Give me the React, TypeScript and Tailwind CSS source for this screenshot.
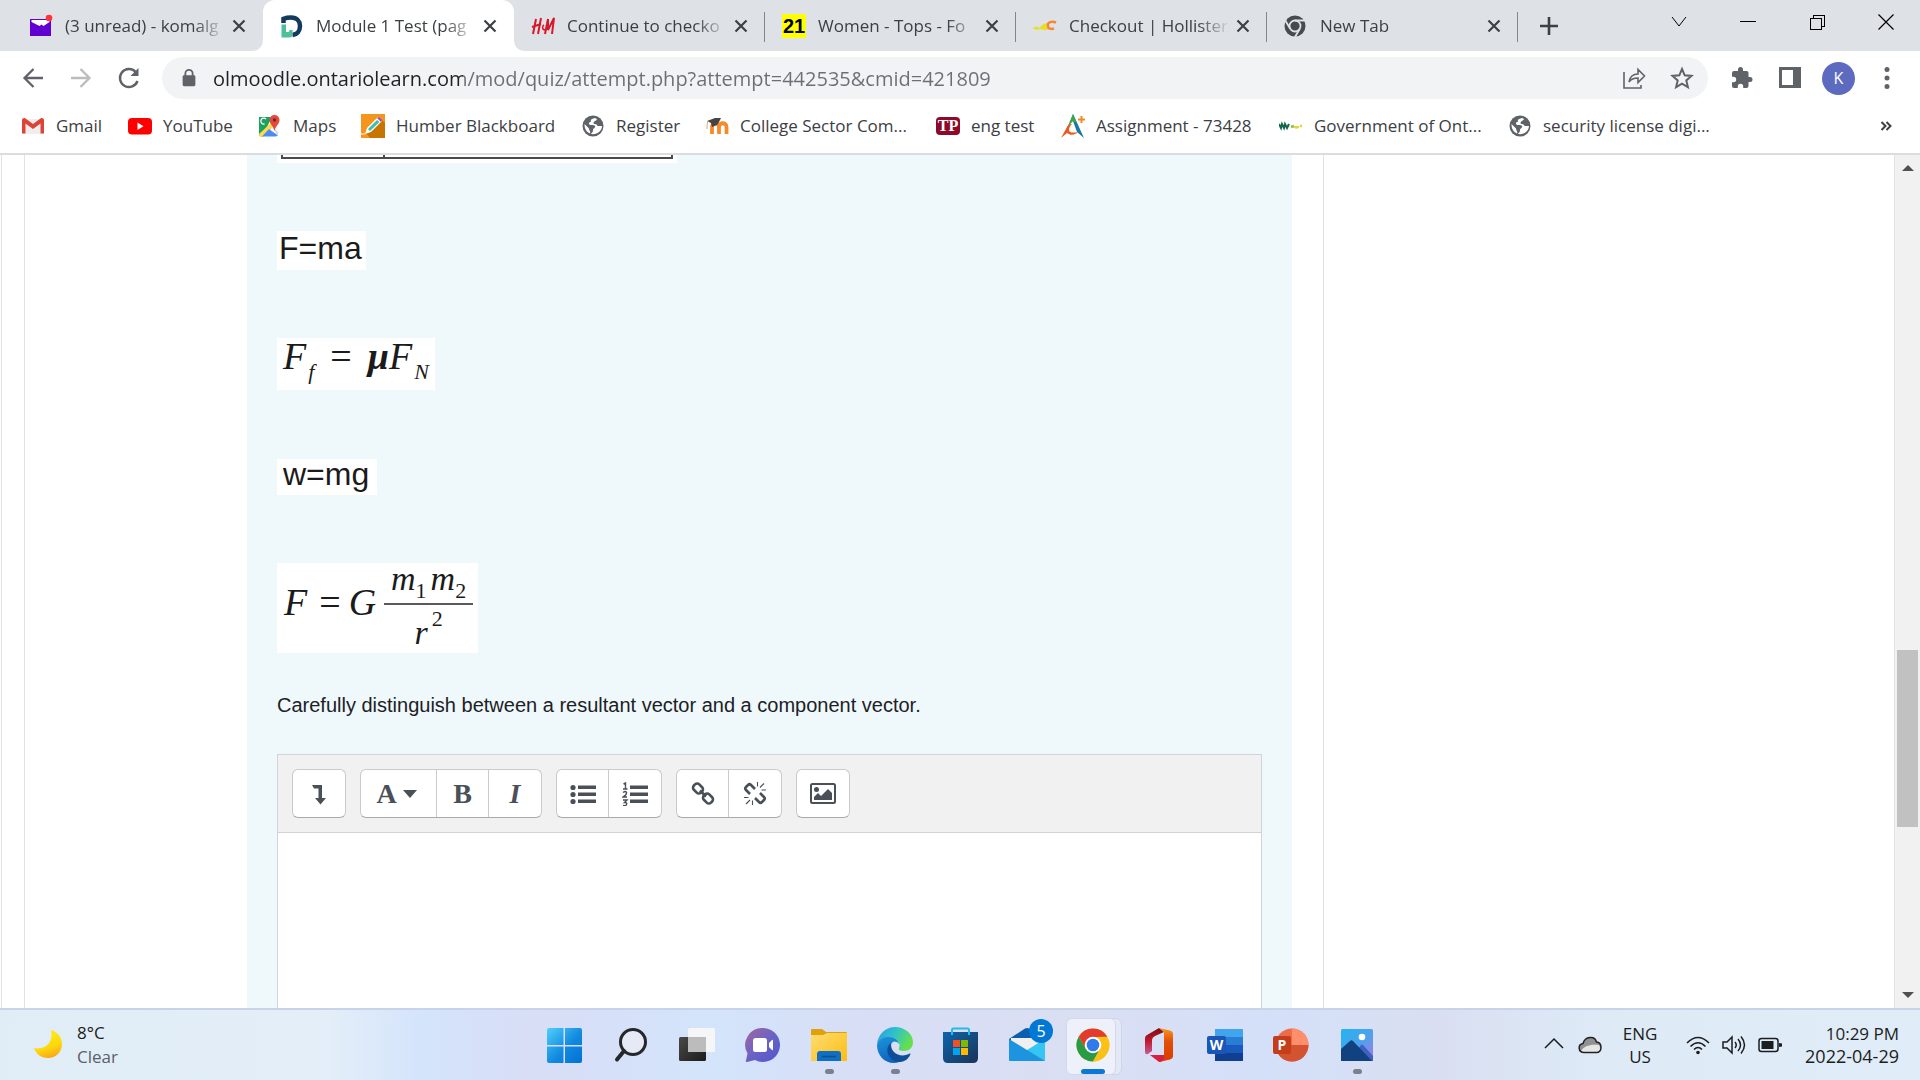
import React from "react";

/* ---------- Tab icons ---------- */

const YahooMailIcon = () => (
  <svg viewBox="0 0 24 24" className="size-6">
    <path d="M1 5h21v17H1z" fill="#6001d2" />
    <path d="M2.500 6h18v2l-6 4-2-1.500L10.500 12 2.500 8z" fill="#fff" />
    <circle cx="20" cy="4" r="3.300" fill="#ff333a" />
  </svg>
);
const OntarioLearnIcon = () => (
  <svg viewBox="0 0 24 24" className="size-6">
    <path d="M3.500 9V4.800C6 3.800 8 3.500 11 3.500c6 0 9 4 9 8.500 0 5-3 8.500-7.500 9" fill="none" stroke="#123a5c" strokeWidth="4.500" />
    <path d="M1.500 10.500h4.500V18h2q1.500 0 1.500-2h3v4q0 3.500-3 3.500h-8z" fill="#4dbf9a" />
  </svg>
);
const HmIcon = () => (
  <svg viewBox="0 0 26 24" className="h-6 w-[26px]" fill="none" stroke="#d6182a" strokeWidth="2">
    <path d="M5 5 2 20M10 4 7 20M1 13l9-3M17 5l-3 15M17 5v11l6-12-2 16" />
    <path d="M13 11c-2 1-2 5 1 5" strokeWidth="1.500" />
  </svg>
);
const HollisterIcon = () => (
  <svg viewBox="0 0 24 24" className="size-6">
    <path d="M0 14c2-2 4-2 6 0 2-2 5-5 9-5-2 2-2 4 0 6-3 2-6 0-8 0-2 1-5 1-7-1z" fill="#e8df20" />
    <path d="M23 8.500c-5-2-9 0-8 4 0 2 3 3 6 2" fill="none" stroke="#f98436" strokeWidth="2.500" />
  </svg>
);
const ChromeMonoIcon = () => (
  <svg viewBox="0 0 24 24" className="size-6">
    <circle cx="11" cy="12" r="10.500" fill="#474b50" />
    <circle cx="11" cy="12" r="5.500" fill="none" stroke="#dee1e6" strokeWidth="1.800" />
    <path d="M11 6.500h10M6.200 14.700 1 6M15.800 14.700 11 23" stroke="#dee1e6" strokeWidth="1.800" />
  </svg>
);

/* ---------- Bookmark icons ---------- */

const GmailIcon = () => (
  <svg viewBox="0 0 24 24" className="size-6">
    <path d="M2 5h20v15H2z" fill="#eeeeee" />
    <path d="M1 6v13.500h3.500V9.500L12 15l7.500-5.500v10H23V6c0-1.500-2-2.500-3.500-1.500L12 10 4.500 4.500C3 3.500 1 4.500 1 6z" fill="#dc4437" />
  </svg>
);
const YouTubeIcon = () => (
  <svg viewBox="0 0 24 24" className="size-6">
    <rect y="4" width="24" height="16.500" rx="4" fill="#f00" />
    <path d="m9.500 8.500 6 3.700-6 3.800z" fill="#fff" />
  </svg>
);
const MapsIcon = () => (
  <svg viewBox="0 0 24 24" className="size-6">
    <path d="M1 3h13l-5 10-8 9z" fill="#1fa15f" />
    <path d="m1 20 12-11 3 3L5 23H2z" fill="#ffd94b" />
    <path d="m11 15-7 7.500h14l2-1z" fill="#4b8bf4" />
    <path d="m14 12 6 6v4z" fill="#d5d8dc" />
    <path d="M6.500 10a3 3 0 1 1 1.500-5" stroke="#fff" fill="none" strokeWidth="1.300" />
    <path d="M11.500 6a5 5 0 0 1 10 0c0 4-3.500 5-5 11-1.500-6-5-7-5-11z" fill="#e24a3e" />
    <circle cx="16.500" cy="6" r="1.700" fill="#7d231e" />
  </svg>
);
const PencilTileIcon = () => (
  <svg viewBox="0 0 24 24" className="size-6">
    <path d="M0 0h24v24H0z" fill="#f6951e" />
    <path d="m20 5 4 4v15H9l-4-5z" fill="#c87400" />
    <path d="m4 20 2-6L17 3l4 4L10 18z" fill="#fff" />
    <path d="m7 15 9-9 2.500 2L9 17z" fill="#35c3b0" />
    <path d="m16 4 2-1 3 3-1 2z" fill="#a44bbd" />
    <path d="M0 20h4" stroke="#fff" />
  </svg>
);
const GlobeIcon = () => (
  <svg viewBox="0 0 24 24" className="size-6">
    <circle cx="12" cy="12" r="10.500" fill="#5f6368" />
    <path d="M14 4c-2 1-5 1-4 3 1 1-3 1-2 3s5 0 6 2-2 2-2 4c0 3-2 3-2 4 6 1 11-3 11-8h-4c-1 0-1-2-3-2s-2-2 0-3 3-2 0-3zM3.500 10c0 5 2 8 5.500 9.500 1-2-1-3-1-5z" fill="#fff" />
  </svg>
);
const MoodleIcon = () => (
  <svg viewBox="0 0 24 24" className="size-6">
    <path d="M7 20v-7c0-5 7-5 7 0v7m0-7c0-5 7.500-5 7.500 0v7" fill="none" stroke="#f58a2b" strokeWidth="3.800" />
    <path d="m2 7 8-3 6 0-2 4-2 3-5 2-1-4z" fill="#444" />
    <path d="M3 7c-1 3-1 5-1 8" stroke="#d9a77c" fill="none" />
  </svg>
);
const TpIcon = () => (
  <span className="flex h-[18px] w-6 items-center justify-center rounded-sm bg-[#8d0a2a] font-['Liberation_Serif',serif] text-base leading-none font-bold text-white">
    TP
  </span>
);
const APlusIcon = () => (
  <svg viewBox="0 0 24 24" className="size-6">
    <path d="M12 0 9 8l3-1 4 11 7 6z" fill="#1778a5" />
    <path d="M12 0 6 14l6-7 4 2z" fill="#3fa648" />
    <path d="m6 13-6 11 6-5c4 3 8 2 11-1-4 1-9 1-9-2 0-2 1-4 3-6-3 0-4 1-5 3z" fill="#ea5a20" />
    <path d="M20.500 2v7M17 5.500h7" stroke="#f28a20" strokeWidth="2" />
  </svg>
);
const OntarioGovIcon = () => (
  <svg viewBox="0 0 24 24" className="size-6" fill="none" strokeWidth="2.500">
    <path d="M0 10l2 4 1-4 2 4 1-4 2 4 2-4" stroke="#13694a" strokeWidth="2" />
    <path d="m12 13 3-1" stroke="#9ab54a" />
    <path d="M16 12c0 2 3 2 3 0M21 12h2" stroke="#d9d92e" />
  </svg>
);

/* ---------- Taskbar icons ---------- */

const StartIcon = () => (
  <svg viewBox="0 0 36 36" className="size-9">
    <defs>
      <linearGradient id="start" x1="0" y1="0" x2="1" y2="1">
        <stop stopColor="#4fd0fb" />
        <stop offset=".55" stopColor="#128ae0" />
        <stop offset="1" stopColor="#0271d3" />
      </linearGradient>
    </defs>
    <path d="M2 1h14.500v17H0V3q0-2 2-2zM18 1h15q2 0 2 2v15H18zM0 19.500h16.500V36H2q-2 0-2-2zM18 19.500h17V34q0 2-2 2H18z" fill="url(#start)" />
  </svg>
);
const SearchIcon = () => (
  <svg viewBox="0 0 36 36" className="size-9" fill="none" stroke="#26272a" strokeLinecap="round">
    <circle cx="20" cy="15" r="12.500" fill="#e6e9f6" strokeWidth="3" />
    <path d="m11 24-7 8.500" strokeWidth="4" />
  </svg>
);
const TaskViewIcon = () => (
  <svg viewBox="0 0 36 36" className="size-9">
    <defs>
      <linearGradient id="tv" x1="0" y1="0" x2="1" y2="1">
        <stop stopColor="#4a4a48" />
        <stop offset="1" stopColor="#1c1c1b" />
      </linearGradient>
    </defs>
    <rect y="10" width="27" height="24" rx="1.500" fill="url(#tv)" />
    <rect x="9" y="1" width="27" height="24" rx="1.500" fill="#f7f7f7" fillOpacity=".9" />
    <path d="M9 10h18v15H9z" fill="#bcbcbc" />
  </svg>
);
const ChatIcon = () => (
  <svg viewBox="0 0 36 36" className="size-9">
    <defs>
      <linearGradient id="chat" x1="0" y1="0" x2="1" y2="1">
        <stop stopColor="#a5669f" />
        <stop offset=".5" stopColor="#6a63c4" />
        <stop offset="1" stopColor="#5353cf" />
      </linearGradient>
    </defs>
    <path d="M18 1a17 17 0 1 1-8 32l-8 2c-1 0-1.500-.5-1-1.500l1.500-7A17 17 0 0 1 18 1z" fill="url(#chat)" />
    <rect x="8" y="11" width="14" height="14" rx="2.500" fill="#fff" />
    <path d="m24 16 3-3q1-.5 1 .5v9q0 1-1 .5l-3-3z" fill="#fff" />
  </svg>
);
const ExplorerIcon = () => (
  <svg viewBox="0 0 36 36" className="size-9">
    <defs>
      <linearGradient id="folder" x1="0" y1="0" x2="1" y2="1">
        <stop stopColor="#ffdc72" />
        <stop offset="1" stopColor="#fbbd13" />
      </linearGradient>
    </defs>
    <path d="M0 3q0-1 1-1h10l4 3h20q1 0 1 1v5H0z" fill="#dfa00b" />
    <path d="M0 8h12l4-2h20v27q0 1-1 1H0z" fill="url(#folder)" />
    <path d="M6 34v-7q0-3 3-3h18q3 0 3 3v7z" fill="#0f6fc3" />
    <path d="M11 29.500h14" stroke="#0a4f92" strokeWidth="1.500" />
  </svg>
);
const EdgeIcon = () => (
  <svg viewBox="0 0 36 36" className="size-9">
    <defs>
      <linearGradient id="eg" x1="0" y1="0" x2="1" y2=".4">
        <stop stopColor="#2b9be0" />
        <stop offset=".5" stopColor="#2fc0cf" />
        <stop offset="1" stopColor="#64e04f" />
      </linearGradient>
      <linearGradient id="eb" x1="0" y1="0" x2=".4" y2="1">
        <stop stopColor="#1c95dd" />
        <stop offset="1" stopColor="#0d64bd" />
      </linearGradient>
    </defs>
    <path d="M0 17C1 7 9 0 18 0c10 0 18 7 18 15 0 6-4 9-9 9-4 0-6-1-5-3 2-4-1-8-6-9C9 10 3 12 0 17z" fill="url(#eg)" />
    <path d="M0 18c1-5 6-8 11-8 6 0 10 3 11 7-3-4-8-3-8 2 0 7 5 12 12 13-3 3-6 4-9 4C7 36 0 28 0 18z" fill="url(#eb)" />
    <path d="M14 16c-8 6-2 19 9 19 5 0 9-4 10-7 1-1 0-2-1-1-9 4-19-1-18-11z" fill="#0d4e98" />
  </svg>
);
const StoreIcon = () => (
  <svg viewBox="0 0 36 36" className="size-9">
    <defs>
      <linearGradient id="store" x1="0" y1="0" x2="1" y2="1">
        <stop stopColor="#0b66ad" />
        <stop offset="1" stopColor="#1d3257" />
      </linearGradient>
    </defs>
    <path d="M0 5h35v26q0 5-5 5H5q-5 0-5-5z" fill="url(#store)" />
    <path d="M9 8V3q0-1.500 1.500-1.500h14Q26 1.500 26 3v5" fill="none" stroke="#27b9ee" strokeWidth="2" />
    <path d="M10 13h7v7h-7z" fill="#f25022" />
    <path d="M18 13h7v7h-7z" fill="#7fba00" />
    <path d="M10 21h7v7h-7z" fill="#00a4ef" />
    <path d="M18 21h7v7h-7z" fill="#ffb900" />
  </svg>
);
const MailIcon = () => (
  <svg viewBox="0 0 36 36" className="size-9">
    <path d="M0 12 16 1.500q2-1 4 0L36 12v4H0z" fill="#0b5fae" />
    <path d="M2 11h32v8L18 25 2 17z" fill="#f0f0f0" />
    <path d="M36 12 0 34h35q1 0 1-1z" fill="#35c5f1" />
    <path d="m0 12 36 22H1q-1 0-1-1z" fill="#1d94e0" />
  </svg>
);
const ChromeIcon = () => (
  <svg viewBox="0 0 36 36" className="size-9">
    <circle cx="18" cy="18" r="16.500" fill="#fbc116" />
    <path d="M3.700 9.750A16.500 16.500 0 0 1 32.300 9.750L18 10 11 22z" fill="#e33b2e" />
    <path d="M3.700 9.750A16.500 16.500 0 0 0 18 34.500L25 22 11 22z" fill="#2a9a45" />
    <path d="M18 10h14.300A16.500 16.500 0 0 1 18 34.500L25 22z" fill="#fbc116" />
    <circle cx="18" cy="18" r="8.300" fill="#fff" />
    <circle cx="18" cy="18" r="6.300" fill="#2f7bea" />
  </svg>
);
const OfficeIcon = () => (
  <svg viewBox="0 0 36 36" className="size-9">
    <defs>
      <linearGradient id="of" x1="0" y1="0" x2="0" y2="1">
        <stop stopColor="#7a0c12" />
        <stop offset=".5" stopColor="#c01a2e" />
        <stop offset="1" stopColor="#c75a9c" />
      </linearGradient>
      <linearGradient id="oo" x1="0" y1="0" x2="0" y2="1">
        <stop stopColor="#f79a1e" />
        <stop offset=".4" stopColor="#e24e08" />
        <stop offset="1" stopColor="#d93b01" />
      </linearGradient>
    </defs>
    <path d="M4 11q0-2 2-3L18 1l5 4-9 4q-3 1.500-3 4v11l-4 3q-3 1-3-2z" fill="url(#of)" />
    <path d="m18 1 11 2.500q3 1 3 3v23q0 2-3 3L18 35l5-6V5z" fill="url(#oo)" />
    <path d="M9 28h14v3q-1 4-5 4z" fill="#d81f42" />
  </svg>
);
const WordIcon = () => (
  <svg viewBox="0 0 36 36" className="size-9">
    <path d="M8 2h28v9H8z" fill="#41a5ee" />
    <path d="M8 10h28v8H8z" fill="#2b7cd3" />
    <path d="M8 18h28v8H8z" fill="#185abd" />
    <path d="M8 26h28v8H8z" fill="#103f91" />
    <rect y="9" width="19" height="18" rx="2" fill="#1a56b8" />
    <text x="9.500" y="23" textAnchor="middle" fontSize="14" fontWeight="700" fontFamily="Open Sans, sans-serif" fill="#fff">W</text>
  </svg>
);
const PowerPointIcon = () => (
  <svg viewBox="0 0 36 36" className="size-9">
    <circle cx="19" cy="18" r="16.500" fill="#ed6c47" />
    <path d="M19 1.500A16.500 16.500 0 0 1 35.500 18H19z" fill="#ff8f6b" />
    <path d="M2.500 18h33a16.500 16.500 0 0 1-33 0z" fill="#d35230" />
    <rect y="9" width="18" height="18" rx="2" fill="#c43e1c" />
    <text x="9" y="23" textAnchor="middle" fontSize="14" fontWeight="700" fontFamily="Open Sans, sans-serif" fill="#fff">P</text>
  </svg>
);
const PhotosIcon = () => (
  <svg viewBox="0 0 36 36" className="size-9">
    <defs>
      <linearGradient id="ph" x1="0" y1="0" x2="1" y2="1">
        <stop stopColor="#22b4ee" />
        <stop offset=".5" stopColor="#4aa3ec" />
        <stop offset="1" stopColor="#a77be0" />
      </linearGradient>
    </defs>
    <rect x="2" y="2" width="32" height="32" rx="1.500" fill="url(#ph)" />
    <path d="m16 26 6-8q1-1 2 0l10 11v5H16z" fill="#3f61c4" />
    <path d="M2 22 11 14q1.500-1.500 3 0l19 20H2z" fill="#11417f" />
    <circle cx="23" cy="10" r="3.300" fill="#fff" />
  </svg>
);

/* ---------- Data ---------- */

const tabs = [
  { title: "(3 unread) - komalg", icon: <YahooMailIcon />, active: false, divider: false },
  { title: "Module 1 Test (pag", icon: <OntarioLearnIcon />, active: true, divider: false },
  { title: "Continue to checko", icon: <HmIcon />, active: false, divider: true },
  {
    title: "Women - Tops - Fo",
    icon: (
      <span className="flex size-6 items-center justify-center bg-[#ffff00] font-['Liberation_Sans',sans-serif] text-xl font-bold text-black">
        21
      </span>
    ),
    active: false,
    divider: true,
  },
  { title: "Checkout | Hollister", icon: <HollisterIcon />, active: false, divider: true },
  { title: "New Tab", icon: <ChromeMonoIcon />, active: false, divider: true },
];

const bookmarks = [
  { label: "Gmail", icon: <GmailIcon />, width: "w-[107px]" },
  { label: "YouTube", icon: <YouTubeIcon />, width: "w-[130px]" },
  { label: "Maps", icon: <MapsIcon />, width: "w-[103px]" },
  { label: "Humber Blackboard", icon: <PencilTileIcon />, width: "w-[220px]" },
  { label: "Register", icon: <GlobeIcon />, width: "w-[124px]" },
  { label: "College Sector Com...", icon: <MoodleIcon />, width: "w-[231px]" },
  { label: "eng test", icon: <TpIcon />, width: "w-[125px]" },
  { label: "Assignment - 73428", icon: <APlusIcon />, width: "w-[218px]" },
  { label: "Government of Ont...", icon: <OntarioGovIcon />, width: "w-[229px]" },
  { label: "security license digi...", icon: <GlobeIcon />, width: "w-[220px]" },
];

const apps = [
  { name: "Start", icon: <StartIcon />, state: "" },
  { name: "Search", icon: <SearchIcon />, state: "" },
  { name: "Task View", icon: <TaskViewIcon />, state: "" },
  { name: "Chat", icon: <ChatIcon />, state: "" },
  { name: "File Explorer", icon: <ExplorerIcon />, state: "open" },
  { name: "Microsoft Edge", icon: <EdgeIcon />, state: "open" },
  { name: "Microsoft Store", icon: <StoreIcon />, state: "" },
  { name: "Mail", icon: <MailIcon />, state: "badge" },
  { name: "Google Chrome", icon: <ChromeIcon />, state: "active" },
  { name: "Office", icon: <OfficeIcon />, state: "" },
  { name: "Word", icon: <WordIcon />, state: "" },
  { name: "PowerPoint", icon: <PowerPointIcon />, state: "" },
  { name: "Photos", icon: <PhotosIcon />, state: "open" },
];

/* ---------- Browser chrome ---------- */

const CloseGlyph = () => (
  <svg viewBox="0 0 14 14" className="size-3.5" stroke="#3c4043" strokeWidth="2.200">
    <path d="m1.500 1.500 11 11m0-11-11 11" />
  </svg>
);

function TabStrip() {
  return (
    <header className="flex h-[51px] shrink-0 bg-[#dee1e6] pl-3">
      <div role="tablist" className="flex">
        {tabs.map((t) => (
          <div
            key={t.title}
            className={
              t.active
                ? "relative flex w-[251px] items-center rounded-t-xl bg-white pr-[17px] pl-[17px]"
                : "relative flex w-[251px] items-center pr-[17px] pl-[17px]"
            }
          >
            {t.active && (
              <svg viewBox="0 0 275 12" className="absolute bottom-0 -left-3 h-3 w-[275px]" fill="#fff">
                <path d="M0 12q12 0 12-12v12zM275 12q-12 0-12-12v12z" />
              </svg>
            )}
            <span className="flex w-9 shrink-0">{t.icon}</span>
            <button
              role="tab"
              aria-selected={t.active}
              className="min-w-0 flex-1 text-left text-[17px] whitespace-nowrap text-[#3c4043] [mask-image:linear-gradient(to_right,black_80%,transparent)]"
            >
              {t.title}
            </button>
            <button aria-label={"Close " + t.title} className="ml-1.5">
              <CloseGlyph />
            </button>
            {t.divider && <span className="absolute top-3 right-0 h-[30px] w-px bg-[#80868b]" />}
          </div>
        ))}
      </div>
      <button aria-label="New tab" className="ml-5 self-center">
        <svg viewBox="0 0 22 22" className="size-[22px]" stroke="#3c4043" strokeWidth="2.600">
          <path d="M11 2v18M2 11h18" />
        </svg>
      </button>
      <div className="ml-auto flex h-11 items-center text-black">
        <button aria-label="Search tabs" className="flex w-[68px] justify-center">
          <svg viewBox="0 0 16 16" className="size-4" fill="none" stroke="currentColor">
            <path d="m1 3 7 9 7-9" />
          </svg>
        </button>
        <button aria-label="Minimize" className="flex w-[69px] justify-center">
          <svg viewBox="0 0 16 16" className="size-4" stroke="currentColor">
            <path d="M0 7.500h16" />
          </svg>
        </button>
        <button aria-label="Restore" className="flex w-[69px] justify-center">
          <svg viewBox="0 0 16 16" className="size-4" fill="none" stroke="currentColor" shapeRendering="crispEdges">
            <path d="M1 4.500h11v11H1zM4 4V1h11v11h-3" />
          </svg>
        </button>
        <button aria-label="Close" className="flex w-[69px] justify-center">
          <svg viewBox="0 0 16 16" className="size-4" stroke="currentColor" strokeWidth="1.200">
            <path d="m.5.500 15 15m0-15-15 15" />
          </svg>
        </button>
      </div>
    </header>
  );
}

function AddressBar() {
  return (
    <div className="flex h-[54px] shrink-0 items-center bg-white pr-[21px] pl-[21px] text-[#5f6368]">
      <div className="flex w-[141px] gap-6">
        <button aria-label="Back">
          <svg viewBox="0 0 24 24" className="size-6" fill="none" stroke="currentColor" strokeWidth="2.300">
            <path d="M22 12H4M12.500 3 3.500 12l9 9" />
          </svg>
        </button>
        <button aria-label="Forward" className="text-[#babcbe]">
          <svg viewBox="0 0 24 24" className="size-6" fill="none" stroke="currentColor" strokeWidth="2.300">
            <path d="M2 12h18M11.500 3l9 9-9 9" />
          </svg>
        </button>
        <button aria-label="Reload">
          <svg viewBox="0 0 24 24" className="size-6" fill="none" stroke="currentColor" strokeWidth="2.400">
            <path d="M20.500 15A9 9 0 1 1 18.500 5.800L20 8" />
            <path d="M21.500 2v8h-8z" fill="currentColor" stroke="none" />
          </svg>
        </button>
      </div>
      <div className="flex h-[42px] flex-1 items-center rounded-full bg-[#f1f3f4] pr-[14px] pl-[18px]">
        <svg viewBox="0 0 18 22" className="h-5 w-[18px]">
          <rect x="2" y="8" width="14" height="12" rx="1.500" fill="currentColor" />
          <path d="M5 9V6a4 4 0 0 1 8 0v3" fill="none" stroke="currentColor" strokeWidth="2" />
        </svg>
        <input
          aria-label="Address"
          readOnly
          defaultValue="olmoodle.ontariolearn.com/mod/quiz/attempt.php?attempt=442535&cmid=421809"
          className="ml-[15px] h-full flex-1 bg-[linear-gradient(to_right,#202124_250px,#6b6f74_250px)] bg-clip-text text-xl text-transparent outline-none"
        />
        <button aria-label="Share" className="mr-6">
          <svg viewBox="0 0 24 24" className="size-6" fill="none" stroke="currentColor" strokeWidth="1.600">
            <path d="M2 6v16h17v-3M7 16c1-6 4-8 9-8V3.500l6.500 6.500-6.500 6.500V12c-4 0-7 1-9 4z" />
          </svg>
        </button>
        <button aria-label="Bookmark this tab">
          <svg viewBox="0 0 24 24" className="size-6" fill="none" stroke="currentColor" strokeWidth="2">
            <path d="m12 3 2.700 6.300 6.800.600-5.200 4.500 1.600 6.700L12 17.600l-5.900 3.500 1.600-6.700L2.500 9.900l6.800-.600z" />
          </svg>
        </button>
      </div>
      <div className="ml-[22px] flex items-center">
        <button aria-label="Extensions" className="mr-6">
          <svg viewBox="0 0 24 24" className="size-6" fill="currentColor">
            <path d="M20 11h-1.500V7a2 2 0 0 0-2-2H13V3.500a2.500 2.500 0 0 0-5 0V5H4a2 2 0 0 0-2 2v3.800h1.500a2.700 2.700 0 0 1 0 5.400H2V20a2 2 0 0 0 2 2h3.800v-1.500a2.700 2.700 0 0 1 5.400 0V22h3.300a2 2 0 0 0 2-2v-4H20a2.500 2.500 0 0 0 0-5z" />
          </svg>
        </button>
        <button aria-label="Side panel" className="mr-5">
          <svg viewBox="0 0 24 24" className="size-6">
            <path d="M1 1h22v21H1z" fill="currentColor" />
            <path d="M4 4h11v15H4z" fill="#fff" />
          </svg>
        </button>
        <button aria-label="Profile" className="mr-5 size-[33px] rounded-full bg-[#5c6bc0] text-base text-white">
          K
        </button>
        <button aria-label="Menu">
          <svg viewBox="0 0 24 24" className="size-6" fill="currentColor">
            <circle cx="12" cy="3.500" r="2.500" />
            <circle cx="12" cy="12" r="2.500" />
            <circle cx="12" cy="20.500" r="2.500" />
          </svg>
        </button>
      </div>
    </div>
  );
}

function BookmarksBar() {
  return (
    <nav className="flex h-[50px] shrink-0 items-center border-b-2 border-[#dadce0] bg-white pr-7 pb-1.5 pl-[21px] text-[17px] text-[#3c4043]">
      {bookmarks.map((b) => (
        <a key={b.label} href="#" className={"flex shrink-0 items-center gap-[11px] whitespace-nowrap " + b.width}>
          {b.icon}
          {b.label}
        </a>
      ))}
      <button aria-label="More bookmarks" className="ml-auto">
        <svg viewBox="0 0 12 12" className="size-3" fill="none" stroke="#3c4043" strokeWidth="2">
          <path d="m1.500 2 4 4-4 4M6.500 2l4 4-4 4" />
        </svg>
      </button>
    </nav>
  );
}

/* ---------- Quiz page ---------- */

const toolButton = "flex h-[47px] w-[52px] items-center justify-center";
const toolGroup = "flex divide-x divide-[#c8cacc] rounded-md border border-b-[#a8aaac] border-[#c8cacc] bg-white";

function EditorToolbar() {
  return (
    <div role="toolbar" className="flex gap-3.5 border-b border-[#ced4da] bg-[#f1f1f1] p-3.5 text-[#495057]">
      <div className={toolGroup}>
        <button aria-label="Show more buttons" className={toolButton}>
          <svg viewBox="0 0 24 24" className="size-6">
            <path d="M5 3h10v13h4l-5.500 6.500L8 16h3.500V6.500H7z" fill="currentColor" />
          </svg>
        </button>
      </div>
      <div className={toolGroup + " font-['Liberation_Serif',serif] text-[28px] font-bold"}>
        <button aria-label="Paragraph styles" className="flex h-[47px] w-[76px] items-center justify-center gap-1.5 pr-1">
          A
          <svg viewBox="0 0 14 8" className="h-2 w-3.5">
            <path d="M0 0h14L7 8z" fill="currentColor" />
          </svg>
        </button>
        <button aria-label="Bold" className={toolButton}>B</button>
        <button aria-label="Italic" className={toolButton + " italic"}>I</button>
      </div>
      <div className={toolGroup}>
        <button aria-label="Unordered list" className={toolButton}>
          <svg viewBox="0 0 26 24" className="h-6 w-[26px]" fill="currentColor">
            <path d="M8 3.500h18v3.500H8zM8 10.500h18V14H8zM8 17.500h18V21H8z" />
            <circle cx="3" cy="5.500" r="2.600" />
            <circle cx="3" cy="12.500" r="2.600" />
            <circle cx="3" cy="19.500" r="2.600" />
          </svg>
        </button>
        <button aria-label="Ordered list" className={toolButton}>
          <svg viewBox="0 0 26 24" className="h-6 w-[26px]" fill="currentColor">
            <path d="M8 3.500h18v3.500H8zM8 10.500h18V14H8zM8 17.500h18V21H8z" />
            <path d="M1.500 2 3.500 1v6M1 7h4.500M1 10.500q3-2 3.500 0T1 15h4M1 18h4l-2.500 2.500q3 0 2 2T1 23.500" fill="none" stroke="currentColor" strokeWidth="1.400" />
          </svg>
        </button>
      </div>
      <div className={toolGroup}>
        <button aria-label="Link" className={toolButton}>
          <svg viewBox="0 0 24 24" className="size-6" fill="none" stroke="currentColor" strokeWidth="2.600">
            <rect x="-5" y="-3.800" width="10" height="7.600" rx="3" transform="translate(7 6.500) rotate(45)" />
            <rect x="-5" y="-3.800" width="10" height="7.600" rx="3" transform="translate(17 16.500) rotate(45)" />
            <path d="m9 8.500 6 6" />
          </svg>
        </button>
        <button aria-label="Unlink" className={toolButton}>
          <svg viewBox="0 0 24 24" className="size-6" fill="none" stroke="currentColor" strokeWidth="2.600">
            <path d="m7 12-4-4q-1.500-1.500 0-3l2-2q1.500-1.500 3 0l4 4M17 11l4 4q1.500 1.500 0 3l-2 2q-1.500 1.500-3 0l-4-4" />
            <path d="M14.500 0v4.500M17 5.500l4-4M18.500 8h4.500M1 15.500h4.500M3 22l4-4M9.500 18.500V23" strokeWidth="1.100" />
          </svg>
        </button>
      </div>
      <div className={toolGroup}>
        <button aria-label="Insert image" className={toolButton}>
          <svg viewBox="0 0 26 24" className="h-6 w-[26px]">
            <rect x="1" y="2" width="24" height="19" rx="1.500" fill="none" stroke="currentColor" strokeWidth="2" />
            <circle cx="6.500" cy="7.500" r="2.500" fill="currentColor" />
            <path d="M4 18v-3l4-4 3 3 7-7 4 4v7z" fill="currentColor" />
          </svg>
        </button>
      </div>
    </div>
  );
}

const formula = "flex w-fit items-start bg-white text-[#1b1b1b]";
const sans = "font-['Liberation_Sans',sans-serif] text-[32px]";
const serif = "font-['Liberation_Serif',serif] text-[38px] leading-9 italic";
const script = "text-[22px] leading-none";

function QuestionPanel() {
  return (
    <section className="flex min-w-0 flex-1 flex-col bg-[#eff8fb] px-[30px]">
      <div className="h-2 w-[400px] shrink-0 bg-white px-1">
        <div className="flex h-1 border-x-2 border-b-2 border-[#4a4a4a]">
          <div className="w-[102px] border-r-2 border-[#4a4a4a]" />
        </div>
      </div>
      <div className={formula + " mt-[68px] h-[39px] pr-1 pl-0.5 leading-[34px] " + sans}>F=ma</div>
      <div className={formula + " mt-[68px] h-[52px] gap-4 pr-1.5 pl-1.5 " + serif}>
        <span>
          F<span className={"ml-0.5 align-[-10px] " + script}>f</span>
        </span>
        <span className="not-italic">=</span>
        <span>
          <b>μ</b>F<span className={"ml-0.5 align-[-10px] " + script}>N</span>
        </span>
      </div>
      <div className={formula + " mt-[69px] h-9 pr-2 pl-1.5 leading-[30px] " + sans}>w=mg</div>
      <div className={formula + " mt-[68px] h-[90px] gap-2 pr-[5px] pl-[7px] " + serif}>
        <span className="mr-1 pt-[21px]">F</span>
        <span className="pt-[21px] not-italic">=</span>
        <span className="pt-[21px]">G</span>
        <span className="flex w-[89px] flex-col items-center text-[34px] leading-8">
          <span className="flex h-[42px] w-full justify-center gap-1 border-b-2 border-[#5a5a5a]">
            <span>
              m<span className={"align-[-8px] not-italic " + script}>1</span>
            </span>
            <span>
              m<span className={"align-[-8px] not-italic " + script}>2</span>
            </span>
          </span>
          <span className="pt-[3px]">
            r<span className={"ml-1 align-[18px] not-italic " + script}>2</span>
          </span>
        </span>
      </div>
      <p className="mt-10 font-['Liberation_Sans',sans-serif] text-xl leading-6 text-[#1d2125]">
        Carefully distinguish between a resultant vector and a component vector.
      </p>
      <div className="mt-[37px] flex min-h-0 flex-1 flex-col border border-b-0 border-[#ced4da] bg-white">
        <EditorToolbar />
        <textarea aria-label="Answer text" className="w-full flex-1 resize-none bg-white p-3 outline-none" />
      </div>
    </section>
  );
}

function Page() {
  return (
    <main className="flex min-h-0 flex-1 overflow-hidden bg-white">
      <div className="ml-px w-6 shrink-0 border-x border-[#dee2e6]" />
      <div className="w-[222px] shrink-0" />
      <QuestionPanel />
      <div className="w-8 shrink-0 border-r border-[#dee2e6]" />
      <div className="w-[570px] shrink-0" />
      <div className="flex w-[26px] shrink-0 flex-col items-center border-l border-[#e3e3e3] bg-[#f1f1f1] py-2.5">
        <svg viewBox="0 0 12 6" className="h-1.5 w-3">
          <path d="M0 6h12L6 0z" fill="#505050" />
        </svg>
        <div className="mt-[479px] h-[177px] w-[21px] bg-[#c1c1c1]" />
        <svg viewBox="0 0 12 6" className="mt-auto h-1.5 w-3">
          <path d="M0 0h12L6 6z" fill="#505050" />
        </svg>
      </div>
    </main>
  );
}

/* ---------- Taskbar ---------- */

function AppButton({ name, icon, state }: { name: string; icon: React.ReactNode; state: string }) {
  return (
    <button aria-label={name} className="relative flex h-full w-[66px] items-center justify-center">
      {state === "active" && (
        <>
          <span className="absolute top-2 left-3 h-[57px] w-[50px] rounded-md border border-[#cfd4e8] bg-[#e4e9f6]" />
          <span className="absolute top-2 left-[6px] h-[57px] w-[50px] rounded-md border border-[#d3d8ea] bg-[#eef0fa]" />
        </>
      )}
      <span className="relative">
        {icon}
        {state === "badge" && (
          <span className="absolute -top-2 -right-2 flex size-6 items-center justify-center rounded-full bg-[#0078d4] text-base text-white">
            5
          </span>
        )}
      </span>
      {state === "open" && <span className="absolute bottom-1.5 h-[5px] w-[9px] rounded-full bg-[#7c808e]" />}
      {state === "active" && <span className="absolute bottom-1.5 h-[5px] w-6 rounded-full bg-[#0a78d4]" />}
    </button>
  );
}

function Taskbar() {
  return (
    <footer className="grid h-[72px] shrink-0 grid-cols-[532px_1fr_530px] items-center border-t-2 border-[#c8d3e8] bg-[linear-gradient(to_right,#e1edf6_0%,#e3eef8_17%,#d4e4fb_22%,#d8def6_28%,#d3e4fb_37%,#d8def5_45%,#dadff3_57%,#d4e0f9_66%,#d9dff1_75%,#deebf7_84%,#e0ecf8_100%)] text-[17px] text-[#1c1d20]">
      <div className="flex items-center pl-8">
        <svg viewBox="0 0 30 32" className="h-8 w-[30px]">
          <defs>
            <linearGradient id="moon" x1=".4" y1="0" x2=".7" y2="1">
              <stop stopColor="#ffec17" />
              <stop offset=".6" stopColor="#fdd80c" />
              <stop offset="1" stopColor="#f9a21b" />
            </linearGradient>
          </defs>
          <path d="M19 1c7 2 11 8 11 14 0 8-6 14-14 14-7 0-12-4-14-10 9 2 20-3 17-18z" fill="url(#moon)" />
        </svg>
        <div className="ml-[15px] leading-6">
          <div>8°C</div>
          <div className="text-[#5b6066]">Clear</div>
        </div>
      </div>
      <div className="flex h-full">
        {apps.map((a) => (
          <AppButton key={a.name} {...a} />
        ))}
      </div>
      <div className="flex items-center justify-end pr-[21px]">
        <button aria-label="Show hidden icons" className="mr-3.5">
          <svg viewBox="0 0 20 20" className="size-5" fill="none" stroke="currentColor" strokeWidth="1.500">
            <path d="m1 13 9-9 9 9" />
          </svg>
        </button>
        <svg viewBox="0 0 24 18" className="mr-[18px] h-[18px] w-6">
          <path d="M6 16.500c-6 0-6.500-8-1-9C7 0 17-.5 18.500 6c6 .5 6 10.500 0 10.500z" fill="#929292" />
          <path d="M3 15c3-5 9-7 18-6 2 3 1 7-3 7.500H6z" fill="#e6e6e6" />
          <path d="M6 16.500c-6 0-6.500-8-1-9C7 0 17-.5 18.500 6c6 .5 6 10.500 0 10.500z" fill="none" stroke="#222" strokeWidth="1.500" />
        </svg>
        <div className="mr-[26px] w-10 text-center leading-[23px]">
          <div>ENG</div>
          <div>US</div>
        </div>
        <svg viewBox="0 0 24 20" className="mr-3 h-5 w-6" fill="none" stroke="currentColor" strokeWidth="1.600">
          <path d="M1 8q11-11 22 0M4.500 11.500q7.500-7.500 15 0M8 14.500q4-4 8 0" />
          <circle cx="12" cy="17.500" r="1.800" fill="currentColor" stroke="none" />
        </svg>
        <svg viewBox="0 0 24 20" className="mr-3 h-5 w-6" fill="none" stroke="currentColor" strokeWidth="1.500">
          <path d="M1 7h4l5-5v16l-5-5H1zM13 7q2.500 3 0 6M16 4q5 6 0 12M19 1.500q7 8.500 0 17" />
        </svg>
        <svg viewBox="0 0 24 16" className="mr-[21px] h-4 w-6">
          <rect x="1" y="1.500" width="19" height="13" rx="2.500" fill="none" stroke="currentColor" strokeWidth="1.500" />
          <path d="M3.500 4h12v8h-12zM21 6l3 .500v3L21 10z" fill="currentColor" />
        </svg>
        <div className="w-24 text-right text-[17px] leading-[23px] whitespace-nowrap">
          <div>10:29 PM</div>
          <div className="text-lg leading-[23px]">2022-04-29</div>
        </div>
      </div>
    </footer>
  );
}

export default function App() {
  return (
    <div className="flex h-screen flex-col overflow-hidden bg-white font-['Open_Sans','Noto_Sans',sans-serif]">
      <TabStrip />
      <AddressBar />
      <BookmarksBar />
      <Page />
      <Taskbar />
    </div>
  );
}
